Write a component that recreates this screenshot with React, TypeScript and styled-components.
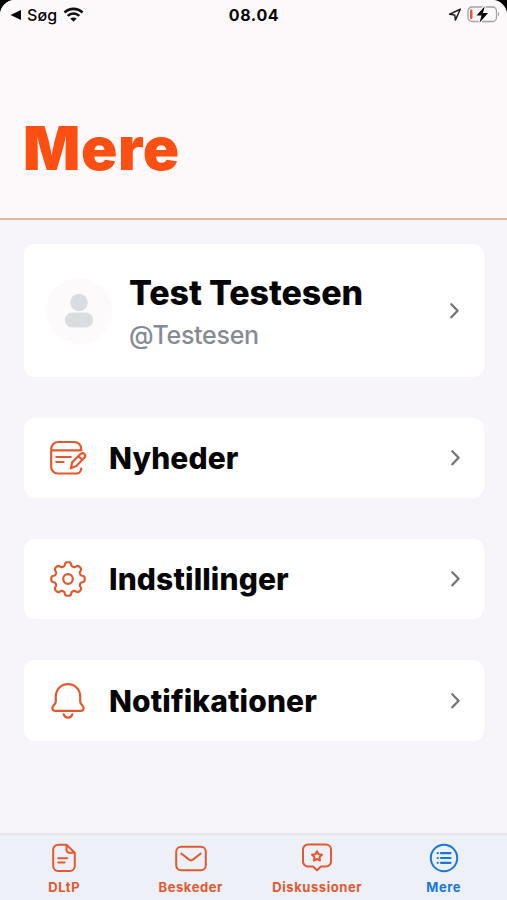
import React from 'react';
import styled, { createGlobalStyle } from 'styled-components';

const ORANGE = '#e2592f';
const BLUE = '#1779d4';

const GlobalStyle = createGlobalStyle`
  * { box-sizing: border-box; }
  body { margin: 0; background: #000; }
`;

const Screen = styled.div`
  width: 507px;
  height: 900px;
  display: flex;
  flex-direction: column;
  overflow: hidden;
  border-radius: 15px 15px 0 0;
  background: #f8f5fa;
  font-family: Inter, 'Liberation Sans', sans-serif;
  color: #050505;
`;

const Header = styled.header`
  height: 220px;
  flex: none;
  background: #fdf9fa;
  border-bottom: 2px solid #e2b5a0;
`;

const StatusBar = styled.div`
  height: 30px;
  display: grid;
  grid-template-columns: 1fr auto 1fr;
  align-items: center;
  padding: 0 7px 0 10px;
`;

const StatusLeft = styled.div`
  display: flex;
  align-items: center;
  font-size: 16px;
  font-weight: 500;
  line-height: 30px;
  letter-spacing: 0.1px;
  svg:first-child { margin-right: 6px; }
  svg:last-child { margin-left: 6px; }
`;

const Clock = styled.div`
  margin-left: -2px;
  font-size: 16px;
  font-weight: 700;
  line-height: 30px;
  letter-spacing: 0.65px;
`;

const StatusRight = styled.div`
  display: flex;
  align-items: center;
  justify-content: flex-end;
  gap: 5px;
`;

const Title = styled.h1`
  margin: 82px 0 0 23px;
  font-size: 60px;
  line-height: 72px;
  font-weight: 900;
  letter-spacing: 0.6px;
  color: #fd4f12;
`;

const Content = styled.main`
  flex: 1;
  display: flex;
  flex-direction: column;
  gap: 41px;
  padding: 24px 23px 0 24px;
`;

const Card = styled.section<{ $height: number; $wide?: boolean }>`
  height: ${(p) => p.$height}px;
  flex: none;
  display: flex;
  align-items: center;
  padding: 0 ${(p) => (p.$wide ? 22 : 21)}px 0 26px;
  border-radius: 11px;
  background: #fff;
`;

const Avatar = styled.div`
  width: 66px;
  height: 66px;
  margin: 0 17px 0 -4px;
  display: flex;
  align-items: center;
  justify-content: center;
  border-radius: 50%;
  background: #fcfafb;
`;

const Identity = styled.div`
  flex: 1;
`;

const Name = styled.h2`
  margin: 2px 0 0;
  font-size: 34px;
  line-height: 42px;
  font-weight: 800;
  letter-spacing: -0.12px;
`;

const Handle = styled.div`
  font-size: 25px;
  line-height: 32px;
  margin-top: 5px;
  font-weight: 500;
  letter-spacing: -0.3px;
  color: #858b95;
`;

const RowIcon = styled.div`
  width: 36px;
  height: 38px;
  margin-right: 23px;
  svg { display: block; }
`;

const RowLabel = styled.div`
  flex: 1;
  font-size: 30px;
  line-height: 40px;
  font-weight: 800;
  letter-spacing: 0.12px;
`;

const TabBar = styled.nav`
  height: 67px;
  flex: none;
  display: grid;
  grid-template-columns: repeat(4, 1fr);
  padding-left: 1px;
  border-top: 2px solid #e7e6ee;
  background: #edf0f7;
`;

const Tab = styled.div<{ $active?: boolean }>`
  display: flex;
  flex-direction: column;
  align-items: center;
  padding-top: 8px;
  color: ${(p) => (p.$active ? BLUE : ORANGE)};
`;

const TabLabel = styled.span`
  margin-top: 5px;
  font-size: 13px;
  line-height: 18px;
  font-weight: 700;
  letter-spacing: 0.58px;
  white-space: nowrap;
`;

const stroke = {
  fill: 'none',
  stroke: 'currentColor',
  strokeLinecap: 'round' as const,
  strokeLinejoin: 'round' as const,
};

const Chevron = () => (
  <svg width="14" height="20" viewBox="0 0 14 20" fill="none" stroke="#747474" strokeWidth="2.3" strokeLinecap="round" strokeLinejoin="round">
    <path d="M3.3 3.3 9.6 9.7 3.3 16.3" />
  </svg>
);

const NewsIcon = () => (
  <svg width="38" height="38" viewBox="0 0 38 38" {...stroke} color={ORANGE} strokeWidth="2.2">
    <path d="M31.3 11.300V10a7 7 0 0 0-7-7H8.200a7 7 0 0 0-7 7v18a6.500 6.500 0 0 0 6.500 6.500h18.500a5 5 0 0 0 5-4.800M1.500 11.300h29.500M6.300 18h14.500M6.300 23h7.300" />
    <path d="m20.800 29.300 1.500-6.200 8.500-8.300a2.700 2.700 0 0 1 3.800 3.800l-8.300 8.500-5.500 2.200ZM28.500 17l3.700 3.700" />
  </svg>
);

const gearPath = Array.from({ length: 192 }, (_, i) => {
  const angle = (i / 192) * Math.PI * 2;
  const radius = 14.9 + 1.9 * Math.tanh(1.9 * Math.cos(8 * angle) + 0.3);
  return `${i ? 'L' : 'M'}${(18 + radius * Math.sin(angle)).toFixed(2)} ${(19 - radius * Math.cos(angle)).toFixed(2)}`;
}).join('') + 'Z';

const GearIcon = () => (
  <svg width="36" height="38" viewBox="0 0 36 38" {...stroke} color={ORANGE} strokeWidth="2.2">
    <path d={gearPath} />
    <circle cx="18" cy="19" r="4.8" />
  </svg>
);

const BellIcon = () => (
  <svg width="36" height="38" viewBox="0 0 36 38" {...stroke} color={ORANGE} strokeWidth="2.2">
    <path d="M5.800 14.500C5.800 7.600 11 2.200 18 2.200s12.200 5.400 12.200 12.300v4.700c0 2 .8 3 2.200 4.300 2.100 2.200 1.400 5.300-1.600 5.300H5.200c-3 0-3.700-3.100-1.600-5.300C5 22.200 5.800 21.200 5.800 19.200Z" />
    <path d="M13.700 32.300c1.500 4.300 7.100 4.300 8.600 0" />
  </svg>
);

const DocumentIcon = () => (
  <svg width="24" height="30" viewBox="0 0 24 30" {...stroke} strokeWidth="2">
    <path d="M14.500 1.700H6.200A5 5 0 0 0 1.200 6.700v16.200a5 5 0 0 0 5 5h11.600a5 5 0 0 0 5-5V9.800ZM14.500 1.700v5.100a3 3 0 0 0 3 3h5.300M6.200 15.200h9M6.200 19.500h6.300" />
  </svg>
);

const MailIcon = () => (
  <svg width="32" height="30" viewBox="0 0 32 30" {...stroke} strokeWidth="2">
    <rect x="1.2" y="3.8" width="29.6" height="23.5" rx="5" />
    <path d="m6.300 10.500 7.700 6.100a3 3 0 0 0 3.900 0l7.800-6.100" />
  </svg>
);

const DiscussionIcon = () => (
  <svg width="30" height="30" viewBox="0 0 30 30" {...stroke} strokeWidth="2">
    <path d="M6 1.500h18a5 5 0 0 1 5 5v12a5 5 0 0 1-5 5h-5l-4 3.800-4-3.800H6a5 5 0 0 1-5-5v-12a5 5 0 0 1 5-5Z" />
    <path d="m15 8.200 1.500 3 3.500.500-2.500 2.400.600 3.500-3.100-1.600-3.100 1.600.600-3.500-2.500-2.400 3.500-.500Z" />
  </svg>
);

const ListIcon = () => (
  <svg width="30" height="30" viewBox="0 0 30 30" {...stroke} strokeWidth="2">
    <circle cx="15" cy="15" r="13.2" />
    <path d="M12 10.200h9.500M12 15h9.500M12 19.800h9.500M8.700 10.200h.1M8.700 15h.1M8.700 19.800h.1" strokeWidth="2.2" />
  </svg>
);

const BackArrow = () => (
  <svg width="11" height="10" viewBox="0 0 11 10"><path d="M.5 5 11 0v10Z" fill="#050505" /></svg>
);

const WifiIcon = () => (
  <svg width="21" height="16" viewBox="0 0 21 16" fill="none" stroke="#111" strokeWidth="2.6">
    <path d="M1.500 5.500c5.200-4.900 12.800-4.900 18 0M4.700 8.900c3.400-3.200 8.200-3.200 11.600 0" />
    <path d="m10.500 14.800-3.200-3.200c1.900-1.600 4.500-1.600 6.400 0Z" fill="#111" stroke="none" />
  </svg>
);

const LocationIcon = () => (
  <svg width="14" height="14" viewBox="0 0 14 14" fill="none" stroke="#222" strokeWidth="1.5" strokeLinejoin="round">
    <path d="M12.300 1.200 1.500 6.200l5.200.700.700 5.200Z" />
  </svg>
);

const BatteryIcon = () => (
  <svg width="33" height="18" viewBox="0 0 33 18">
    <rect x="1" y="1" width="28.5" height="14.5" rx="4" fill="none" stroke="#a4a1a2" strokeWidth="1.3" />
    <path d="M31 6c1.600.800 1.600 3.700 0 4.500Z" fill="#a4a1a2" />
    <rect x="3" y="3.5" width="2.5" height="9.5" rx="1" fill="#dc5848" />
    <path d="m17.800.200-8.300 9.200h5l-2 7.400 8.600-9.700h-5.200Z" fill="#050505" stroke="#fdf9fa" strokeWidth="2.4" paintOrder="stroke" />
  </svg>
);

const PersonIcon = () => (
  <svg width="30" height="36" viewBox="0 0 30 36" fill="#d9dddf">
    <circle cx="15" cy="9.5" r="8.7" />
    <path d="M8.500 19.500h13c4.300 0 7.500 3.200 7.500 7.500s-3.200 7.500-7.500 7.500h-13C4.200 34.500 1 31.300 1 27s3.200-7.500 7.500-7.500Z" />
  </svg>
);

const menu = [
  { label: 'Nyheder', Icon: NewsIcon, height: 80 },
  { label: 'Indstillinger', Icon: GearIcon, height: 80 },
  { label: 'Notifikationer', Icon: BellIcon, height: 81 },
];

const tabs = [
  { label: 'DLtP', Icon: DocumentIcon },
  { label: 'Beskeder', Icon: MailIcon },
  { label: 'Diskussioner', Icon: DiscussionIcon },
  { label: 'Mere', Icon: ListIcon, active: true },
];

export default function App() {
  return (
    <>
      <GlobalStyle />
      <Screen>
        <Header>
          <StatusBar>
            <StatusLeft><BackArrow />Søg<WifiIcon /></StatusLeft>
            <Clock>08.04</Clock>
            <StatusRight><LocationIcon /><BatteryIcon /></StatusRight>
          </StatusBar>
          <Title>Mere</Title>
        </Header>
        <Content>
          <Card $height={133} $wide>
            <Avatar><PersonIcon /></Avatar>
            <Identity>
              <Name>Test Testesen</Name>
              <Handle>@Testesen</Handle>
            </Identity>
            <Chevron />
          </Card>
          {menu.map(({ label, Icon, height }) => (
            <Card key={label} $height={height}>
              <RowIcon><Icon /></RowIcon>
              <RowLabel>{label}</RowLabel>
              <Chevron />
            </Card>
          ))}
        </Content>
        <TabBar>
          {tabs.map(({ label, Icon, active }) => (
            <Tab key={label} $active={active}>
              <Icon />
              <TabLabel>{label}</TabLabel>
            </Tab>
          ))}
        </TabBar>
      </Screen>
    </>
  );
}
